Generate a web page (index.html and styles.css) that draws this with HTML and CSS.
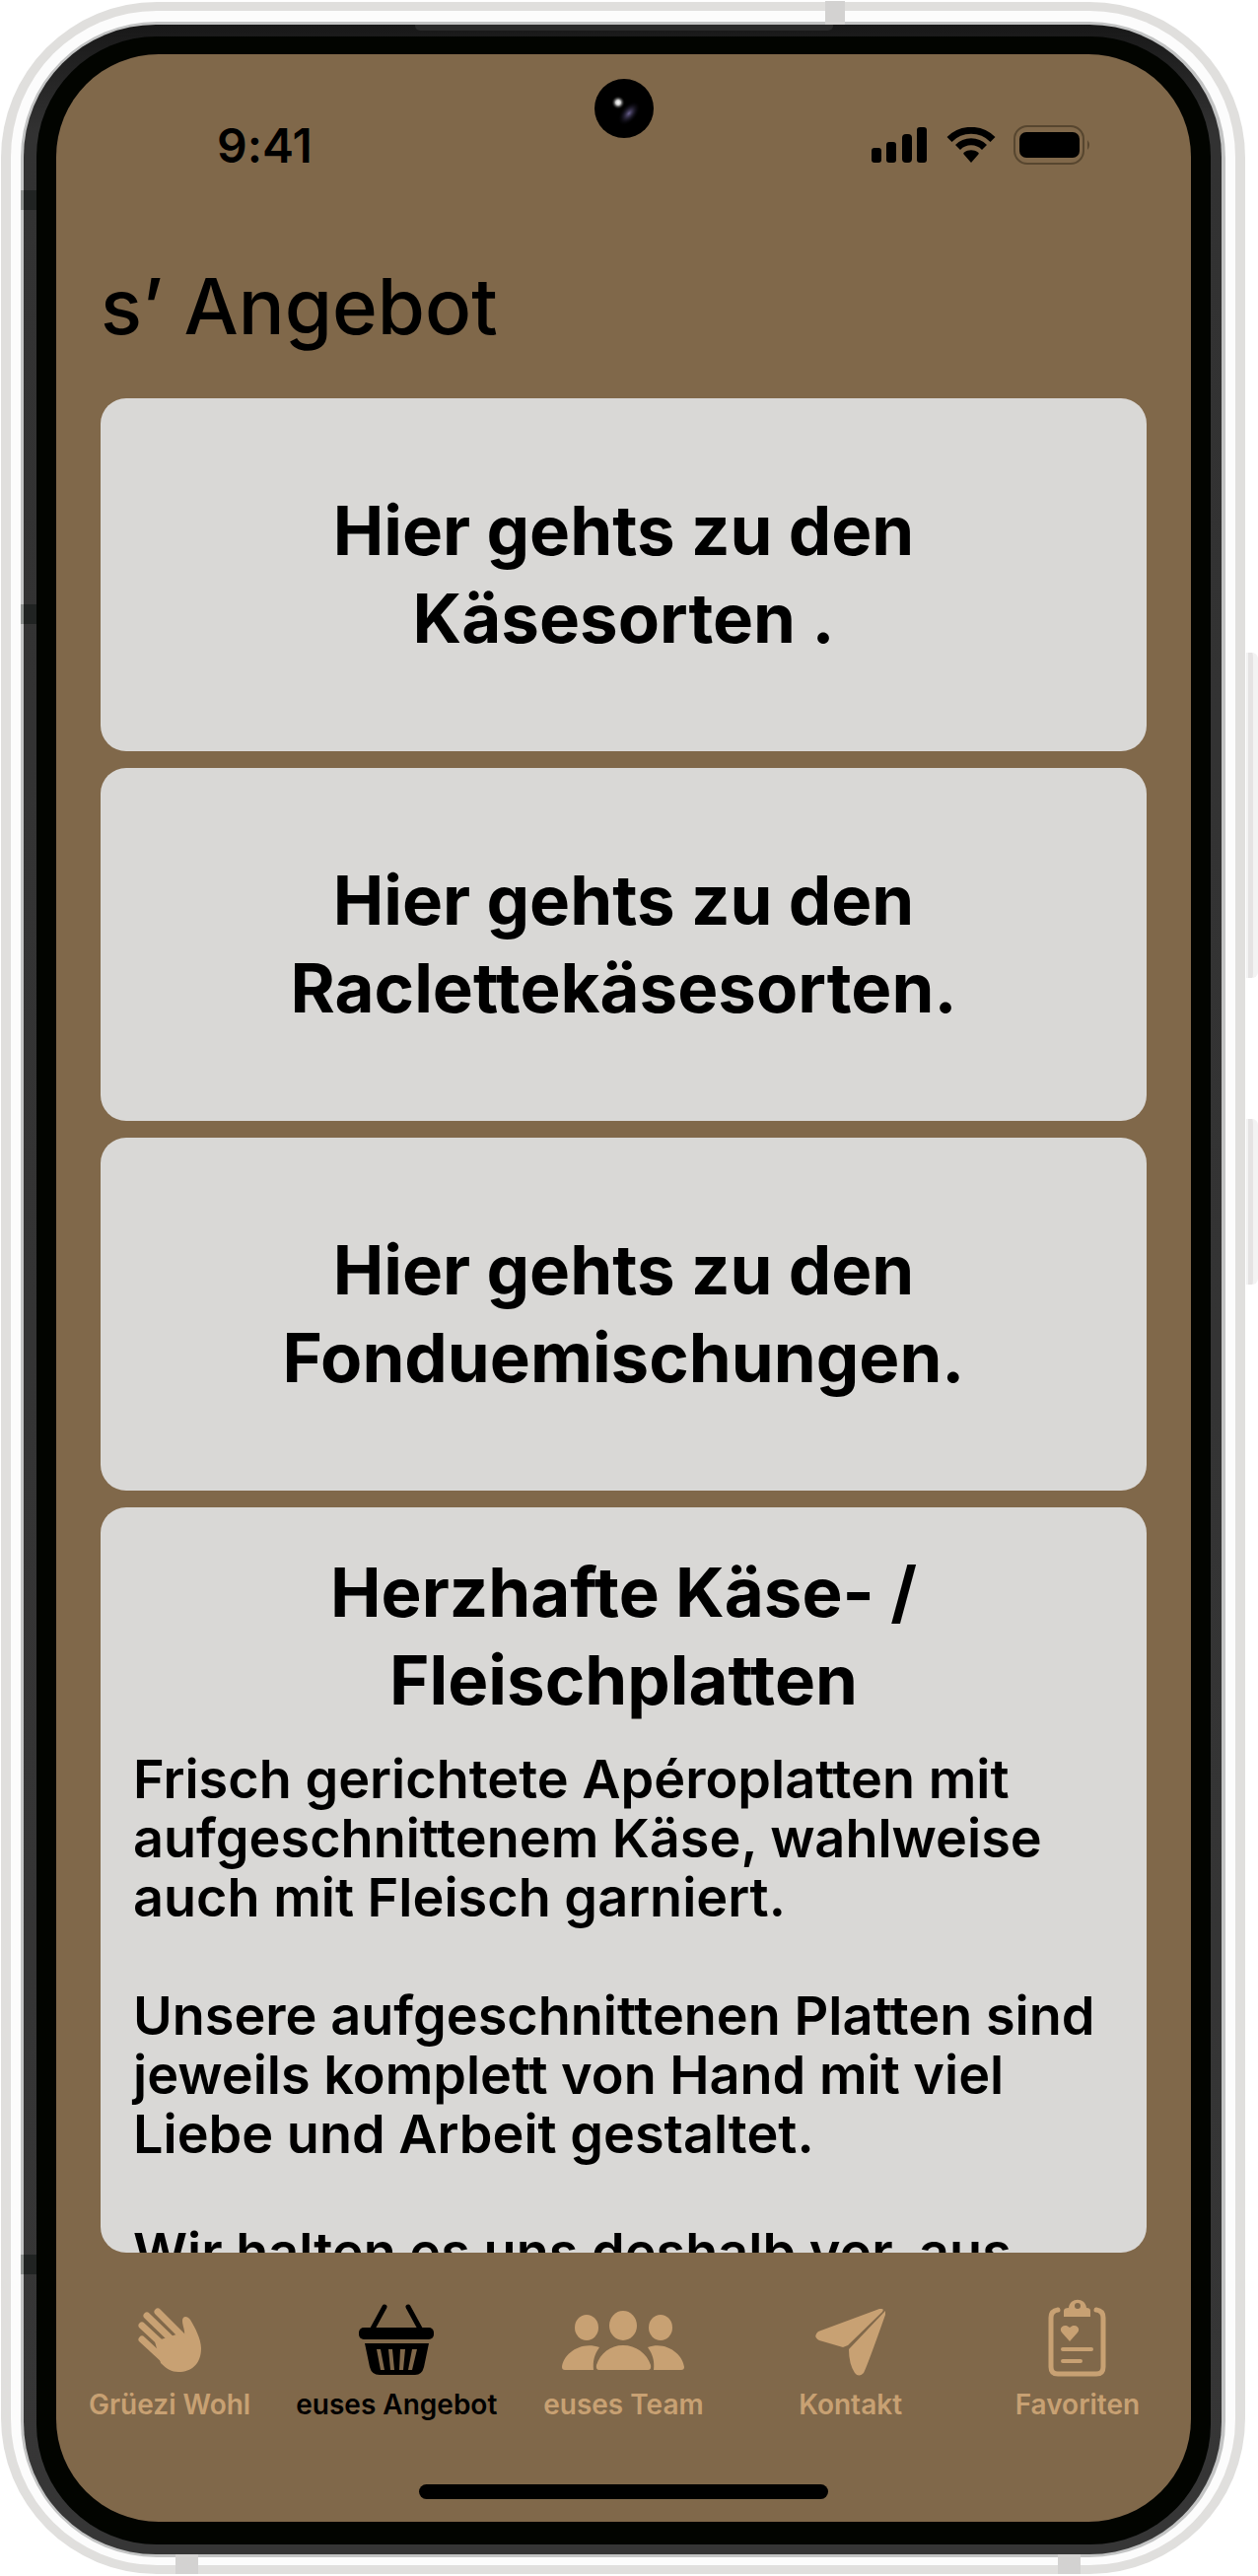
FILE: index.html
```html
<!DOCTYPE html>
<html lang="de-CH">
<head>
<meta charset="utf-8">
<meta name="viewport" content="width=device-width, initial-scale=1">
<title>s’ Angebot</title>
<link rel="stylesheet" href="styles.css">
</head>
<body>
<div class="phone">
  <span class="side-button side-button-volume"></span>
  <span class="side-button side-button-power"></span>
  <span class="band band-top"></span>
  <span class="band band-bottom-left"></span>
  <span class="band band-bottom-right"></span>
  <div class="rim"><div class="edge"><div class="chassis">
    <span class="speaker"></span>
    <span class="notch notch-one"></span>
    <span class="notch notch-two"></span>
    <span class="notch notch-three"></span>
    <div class="bezel">
    <div class="screen">
      <svg class="camera" viewBox="0 0 60 60" aria-hidden="true">
        <defs>
          <radialGradient id="glint"><stop offset="0" stop-color="#fff"/><stop offset=".35" stop-color="#ccc"/><stop offset="1" stop-color="#000" stop-opacity="0"/></radialGradient>
          <radialGradient id="lens"><stop offset="0" stop-color="#6b6190"/><stop offset="1" stop-color="#0a0814" stop-opacity="0"/></radialGradient>
        </defs>
        <circle cx="30" cy="30" r="30"/>
        <ellipse cx="35" cy="35" rx="14" ry="8" transform="rotate(-50 35 35)" fill="url(#lens)"/>
        <circle cx="24" cy="24" r="7" fill="url(#glint)"/>
      </svg>
      <header class="status">
        <span class="time">9:41</span>
        <span class="status-icons">
          <svg class="signal" viewBox="0 0 58 36" aria-hidden="true"><rect x="0" y="21" width="10" height="15" rx="3"/><rect x="15" y="15" width="10" height="21" rx="3"/><rect x="31" y="7" width="10" height="29" rx="4"/><rect x="46" y="0" width="10" height="36" rx="3"/></svg>
          <svg class="wifi" viewBox="0 0 50 36" aria-hidden="true"><path d="M25 36l-7-8c-1-1-1-2 0-2.500c4-3 10-3 14 0c1 .5 1 1.500 0 2.500z"/><path d="M11.500 20.500a19 19 0 0 1 27 0M3 12.500a31 31 0 0 1 44 0" fill="none" stroke="#000" stroke-width="7"/></svg>
          <svg class="battery" viewBox="0 0 78 40" aria-hidden="true"><rect x="1" y="1" width="70" height="38" rx="13" fill="none" stroke="#57462f" stroke-width="2"/><rect x="6" y="7" width="61" height="26" rx="7"/><path d="M75 15q4 5 0 10z" fill="#57462f"/></svg>
        </span>
      </header>
      <main class="content">
        <h1 class="title">s’ Angebot</h1>
        <div class="cards">
          <a class="card link-card" href="#kaesesorten">Hier gehts zu den<br>Käsesorten .</a>
          <a class="card link-card" href="#raclette">Hier gehts zu den<br>Raclettekäsesorten.</a>
          <a class="card link-card" href="#fondue">Hier gehts zu den<br>Fonduemischungen.</a>
          <article class="card info-card">
            <h2 class="card-title">Herzhafte Käse- /<br>Fleischplatten</h2>
            <p class="text">Frisch gerichtete Apéroplatten mit<br>aufgeschnittenem Käse, wahlweise<br>auch mit Fleisch garniert.</p>
            <p class="text">Unsere aufgeschnittenen Platten sind<br>jeweils komplett von Hand mit viel<br>Liebe und Arbeit gestaltet.</p>
            <p class="text">Wir halten es uns deshalb vor, aus</p>
          </article>
        </div>
      </main>
      <nav class="tabs">
        <a class="tab" href="#gruezi">
          <svg class="icon" viewBox="0 0 80 80" aria-hidden="true"><g fill="none" stroke="currentColor" stroke-width="7" stroke-linecap="round"><path d="M12 42L38 66M12 28L40 54M17 18L46 46M28 14L56 42"/></g><path d="M25 44L50 36L55 38C56 33 53 28 53 23C53 18 58 18 61 22C66 30 72 42 72 51C72 67 62 75 49 75C42 75 37 72 31 66Z"/></svg>
          <span>Grüezi Wohl</span></a>
        <a class="tab active" href="#angebot" aria-current="page">
          <svg class="icon" viewBox="0 0 80 80" aria-hidden="true"><path d="M28 9L16 31M52 9L64 31" fill="none" stroke="currentColor" stroke-width="5" stroke-linecap="round"/><rect x="2" y="30" width="76" height="12" rx="5"/><path fill-rule="evenodd" d="M8 46H73L68 70Q66 78 59 78H23Q15 78 13 70ZM20 52L24 73H28L24 52ZM32 52L34 73H38L36 52ZM44 52L43 73H47L49 52ZM56 52L52 73H56L61 52Z"/></svg>
          <span>euses Angebot</span></a>
        <a class="tab" href="#team">
          <svg class="icon icon-wide" viewBox="0 0 126 80" aria-hidden="true"><ellipse cx="26" cy="30" rx="12" ry="13"/><ellipse cx="101" cy="30" rx="12" ry="13"/><ellipse cx="63" cy="28" rx="14" ry="15"/><path d="M33 73C32 64 34 57 39 50C20 43 2 57 1 70Q1 73 4 73ZM94 73C95 64 93 57 88 50C106 43 124 57 125 70Q125 73 122 73ZM39 73Q35 73 36 68C40 56 50 48 63 48S87 56 91 68Q92 73 88 73Z"/></svg>
          <span>euses Team</span></a>
        <a class="tab" href="#kontakt">
          <svg class="icon" viewBox="0 0 80 80" aria-hidden="true"><path d="M71 11Q74 11 72 14L37 48L32 50L8 43Q1 39 7 34L69 11ZM75 13L38 52Q38 67 44 76Q48 81 53 76Q57 68 75 17Z"/></svg>
          <span>Kontakt</span></a>
        <a class="tab" href="#favoriten">
          <svg class="icon" viewBox="0 0 80 80" aria-hidden="true"><path d="M20 12Q13 13 13 20V70Q13 77 20 77H59Q66 77 66 70V20Q66 13 59 12" fill="none" stroke="currentColor" stroke-width="5" stroke-linecap="round"/><path fill-rule="evenodd" d="M26 19V13Q26 10 31 10C32 -1 48 -1 49 10Q53 10 53 13V19ZM40 5A3 3 0 1 0 40 11A3 3 0 1 0 40 5ZM32 44L24 35C20 30 27 25 32 30C37 25 44 30 40 35Z"/><path d="M25 52H54M25 64H43" stroke="currentColor" stroke-width="4" stroke-linecap="round"/></svg>
          <span>Favoriten</span></a>
      </nav>
      <div class="home"></div>
    </div>
    </div>
  </div></div></div>
</div>
</body>
</html>
```
FILE: styles.css
```css
* { box-sizing: border-box; }

body {
  margin: 0;
  background: #fff;
  color: #000;
  font-family: Inter, "Liberation Sans", sans-serif;
  font-variant-ligatures: none;
  overflow-x: hidden;
}

a { color: inherit; text-decoration: none; }
svg { display: block; flex: none; fill: currentColor; }
h1, h2, p { margin: 0; }

/* Device frame: concentric shells from the outside in */
.phone {
  position: relative;
  margin: 2px 13px 2px 1px;
  padding: 9px 10px;
  border-radius: 158px;
  background: #e0dfdd;
}
.rim { padding: 11px 10px 8px; border-radius: 148px; background: #fcfcfc; }
.edge { padding: 3px 4px 3px 3px; border-radius: 138px; background: #c3c4c4; }
.chassis {
  position: relative;
  padding: 12px 11px 10px 13px;
  border-radius: 134px;
  background: linear-gradient(#181818, #323232 110px, #363636);
}
.bezel { padding: 18px 20px 23px; border-radius: 122px; background: #020400; }
.screen {
  position: relative;
  display: flex;
  flex-direction: column;
  border-radius: 104px;
  background: #80684a;
}

.side-button {
  position: absolute;
  right: -13px;
  width: 12px;
  border: solid #f3f3f3;
  border-width: 0 5px 0 2px;
  border-radius: 0 6px 6px 0;
  background: #e5e3e3;
}
.side-button-volume { top: 660px; height: 330px; }
.side-button-power { top: 1133px; height: 168px; }

.band { position: absolute; background: #d3d2d1; }
.band-top { top: -1px; left: 836px; width: 20px; height: 24px; }
.band-bottom-left { bottom: 0; left: 177px; width: 23px; height: 20px; }
.band-bottom-right { bottom: 0; right: 167px; width: 23px; height: 20px; }

.speaker {
  position: absolute;
  top: 0;
  left: 397px;
  right: 394px;
  height: 6px;
  border-radius: 0 0 5px 5px;
  background: #2a2a2a;
}
.notch {
  position: absolute;
  left: -3px;
  width: 16px;
  height: 20px;
  border-left: 3px solid #8f9391;
  background: #202322;
}
.notch-one { top: 168px; }
.notch-two { top: 588px; }
.notch-three { top: 2262px; }

.camera { position: absolute; top: 25px; left: calc(50% - 30px); width: 60px; height: 60px; }

.status {
  display: flex;
  align-items: center;
  justify-content: space-between;
  height: 184px;
  padding: 0 102px 0 163px;
}
.time { font-size: 48px; font-weight: 600; }
.status-icons { display: flex; align-items: center; gap: 18px; }
.signal { width: 58px; height: 36px; }
.wifi { width: 50px; height: 36px; }
.battery { width: 78px; height: 40px; }

.content { padding: 0 45px; }
.title {
  padding: 12px 0 33px;
  font-size: 78px;
  line-height: 120px;
  font-weight: 500;
}
.cards { display: grid; gap: 17px; }
.card { border-radius: 26px; background: #d9d8d6; white-space: nowrap; }
.link-card, .card-title {
  font-size: 69px;
  line-height: 89px;
  font-weight: 700;
  text-align: center;
}
.link-card {
  display: grid;
  place-content: center;
  height: 358px;
}
.info-card { height: 756px; padding: 42px 33px 0; overflow: hidden; }
.card-title { padding-bottom: 26px; }
.text {
  padding-bottom: 60px;
  font-size: 54px;
  line-height: 60px;
  font-weight: 600;
}

.tabs { display: grid; grid-template-columns: repeat(5, 1fr); padding-top: 46px; }
.tab {
  display: flex;
  flex-direction: column;
  align-items: center;
  gap: 11px;
  color: #c8a173;
  font-size: 28px;
  line-height: 34px;
  font-weight: 600;
  white-space: nowrap;
}
.active { color: #000; }
.icon { width: 80px; height: 80px; }
.icon-wide { width: 126px; }

.home {
  align-self: center;
  width: 36%;
  height: 15px;
  margin: 64px 0 23px;
  border-radius: 8px;
  background: #000;
}
```
